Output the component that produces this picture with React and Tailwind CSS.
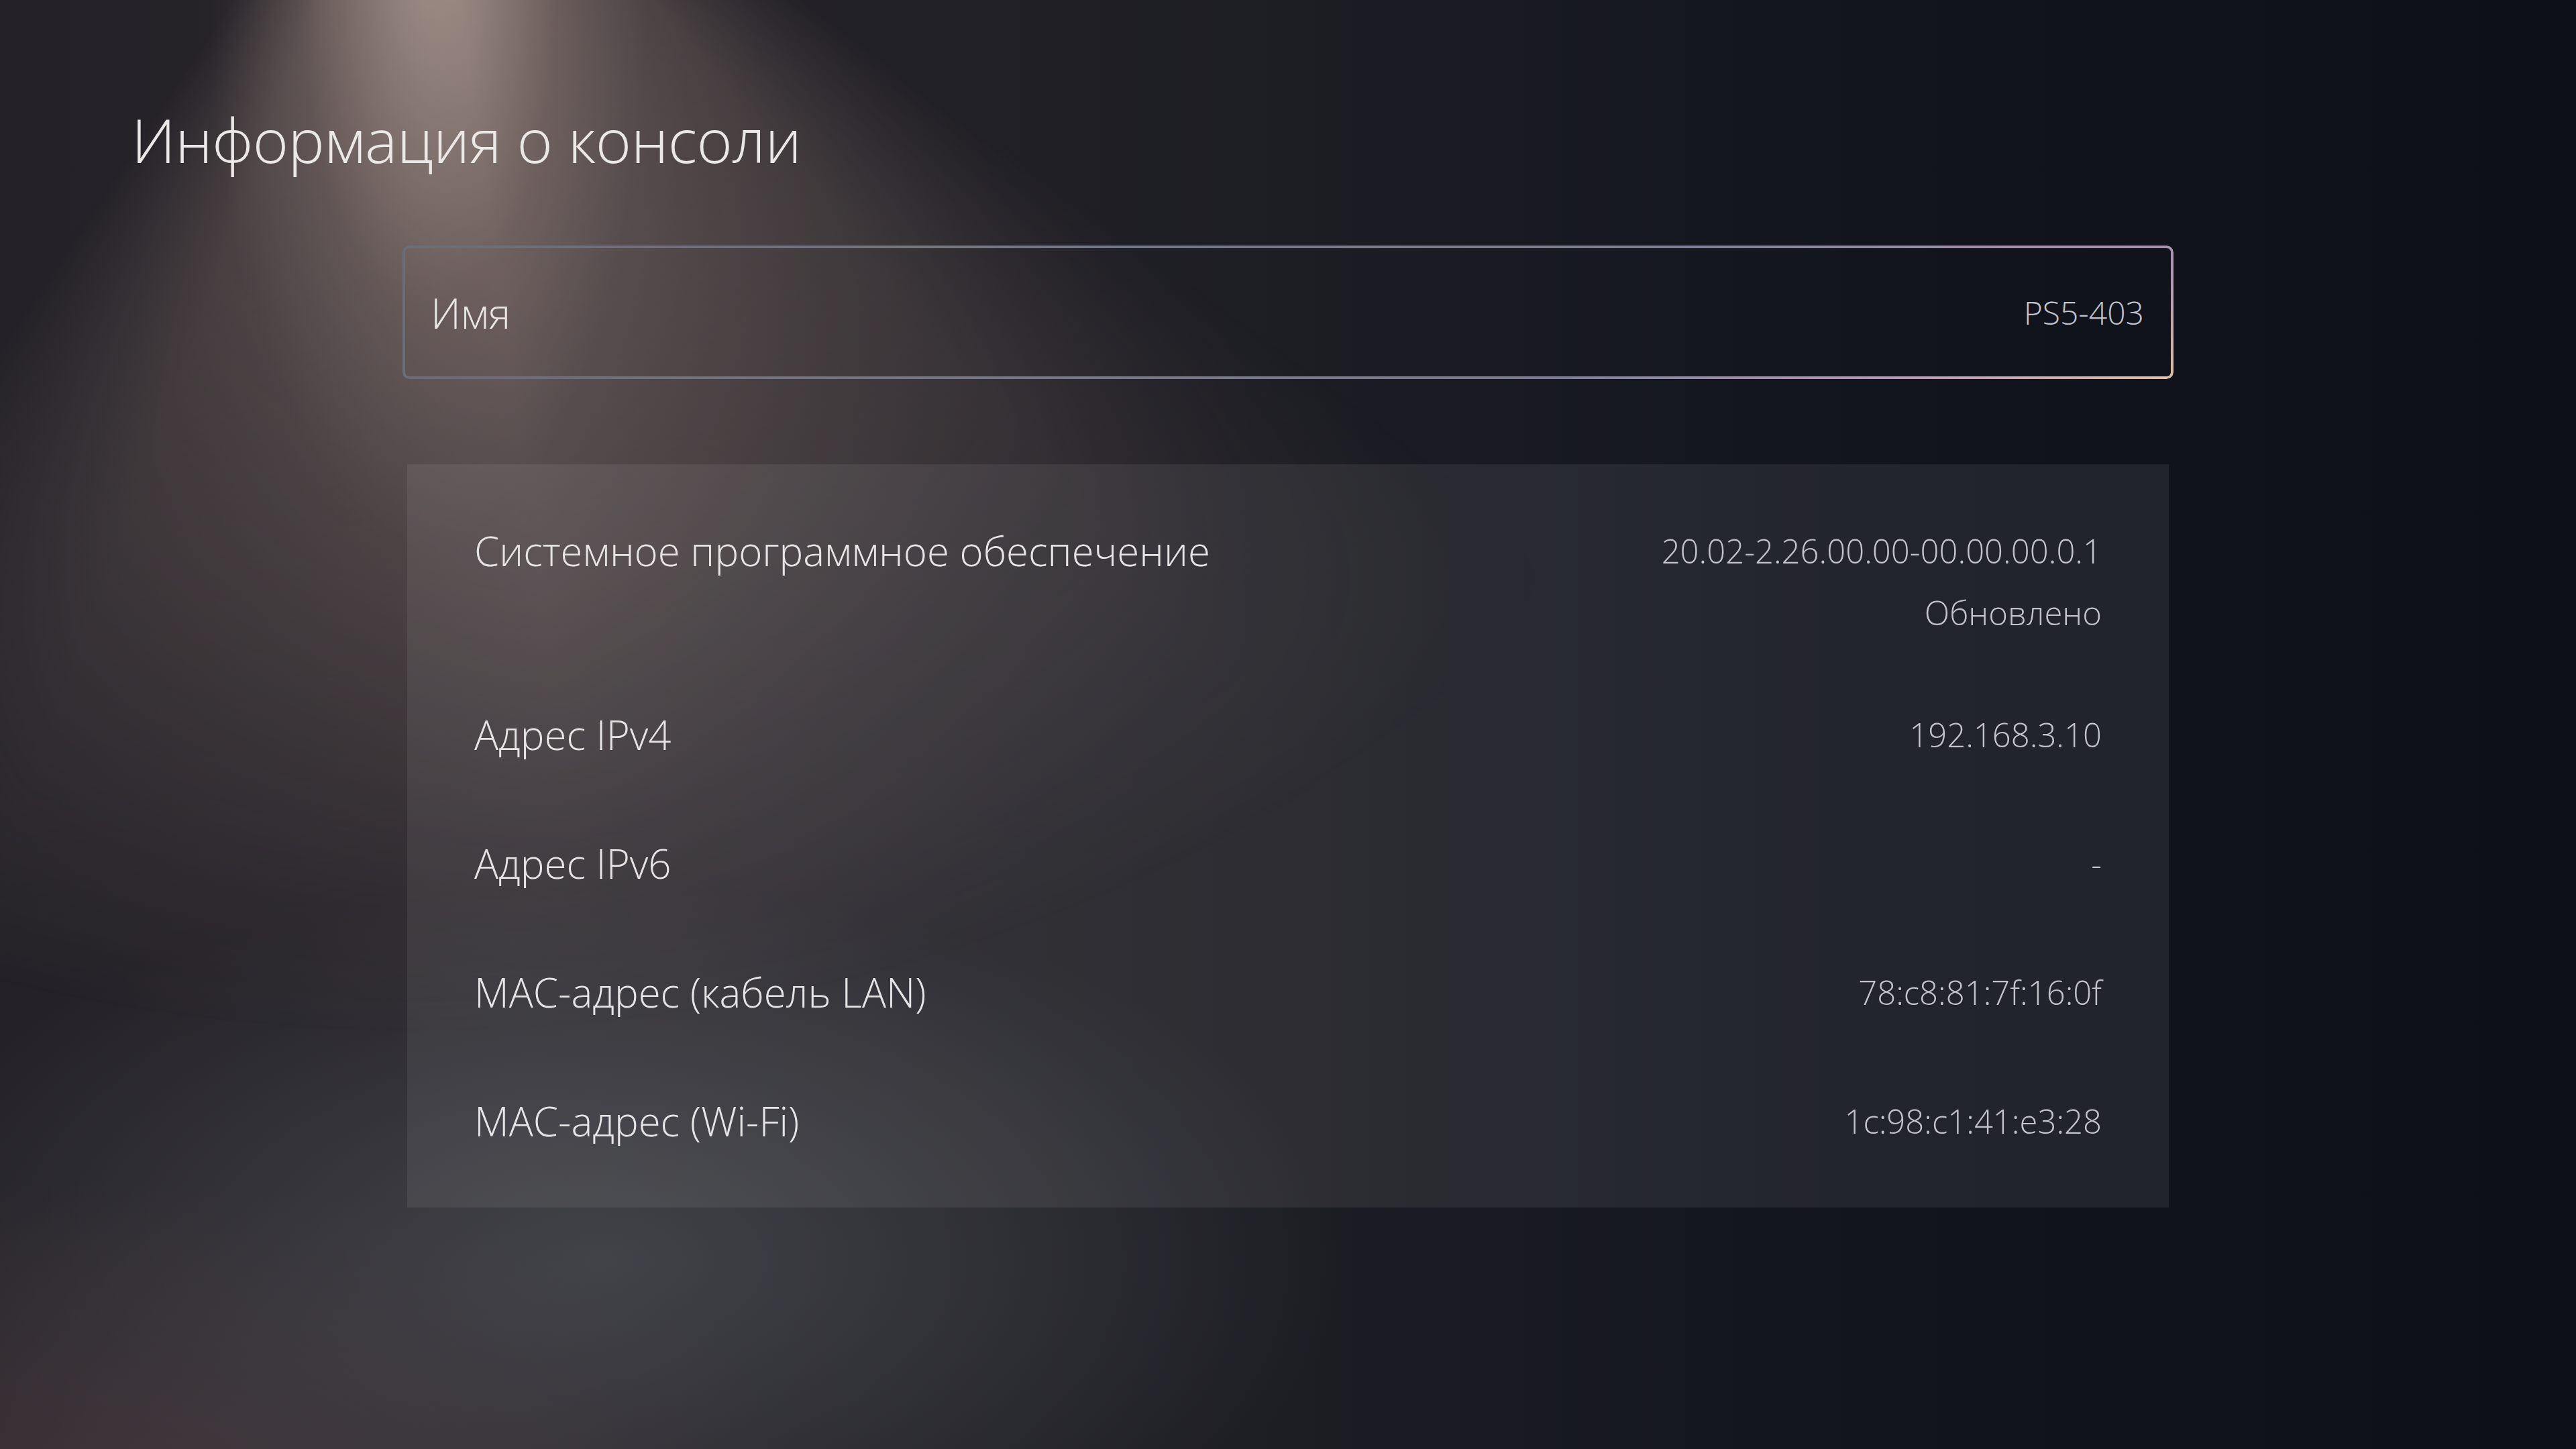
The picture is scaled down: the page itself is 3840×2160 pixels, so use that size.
import React from "react";

const ROWS = [
  {
    label: "Системное программное обеспечение",
    values: ["20.02-2.26.00.00-00.00.00.0.1", "Обновлено"],
    extra: "pb-[40px]",
  },
  { label: "Адрес IPv4", values: ["192.168.3.10"] },
  { label: "Адрес IPv6", values: ["-"] },
  { label: "MAC-адрес (кабель LAN)", values: ["78:c8:81:7f:16:0f"] },
  { label: "MAC-адрес (Wi-Fi)", values: ["1c:98:c1:41:e3:28"] },
];

const InfoRow = ({ label, values, extra = "pb-[50px]" }) => (
  <div className={`flex items-start justify-between px-[100px] pt-[50px] ${extra}`}>
    <span className="text-[60px] leading-[92px] text-[#e6e4e4]">{label}</span>
    <div className="flex flex-col items-end">
      {values.map((v) => (
        <span key={v} className="text-[49px] leading-[92px] text-[#c3c3ca]">
          {v}
        </span>
      ))}
    </div>
  </div>
);

export default function App() {
  return (
    <div className="relative h-[2160px] w-full overflow-hidden font-['Open_Sans',sans-serif] font-light bg-[radial-gradient(ellipse_1100px_560px_at_900px_1880px,rgba(84,88,94,0.6),transparent_100%),radial-gradient(ellipse_1000px_460px_at_200px_2220px,rgba(76,58,62,0.65),transparent_100%),linear-gradient(to_right,#242228_0%,#27242a_20%,#1d1d24_50%,#12151e_72%,#0d1019_100%)]">
      {/* light beam */}
      <div
        aria-hidden="true"
        className="pointer-events-none absolute inset-0 bg-[conic-gradient(from_0deg_at_626px_-415px,transparent_126deg,rgba(120,104,100,0.5)_140deg,rgba(155,134,128,0.72)_172deg,rgba(125,108,104,0.55)_200deg,transparent_214deg)] [mask-image:radial-gradient(ellipse_2700px_2300px_at_626px_-415px,#000_15%,rgba(0,0,0,0.5)_55%,transparent_85%)]"
      />
      <div
        aria-hidden="true"
        className="pointer-events-none absolute inset-0 bg-[radial-gradient(ellipse_330px_900px_at_637px_-80px,rgba(190,170,160,0.6),rgba(150,130,124,0.2)_60%,transparent_100%)]"
      />

      <div className="relative">
        <h1 className="pl-[196px] pt-[148px] text-[91px] leading-[120px] tracking-[-0.5px] text-[#ebe8e8]">
          Информация о консоли
        </h1>

        <div className="mx-auto mt-[98px] w-[2626px]">
          <div className="relative -mx-[7px] flex h-[199px] items-center justify-between rounded-[10px] pl-[42px] pr-[44px]">
            <span
              aria-hidden="true"
              className="pointer-events-none absolute inset-0 rounded-[10px] p-[4px] bg-[radial-gradient(ellipse_900px_320px_at_100%_100%,#dcbfa3_0%,#b796b6_45%,transparent_100%),linear-gradient(to_right,#6b6e77_0%,#777a8a_50%,#8487a4_100%)] [mask:linear-gradient(#000_0_0)_content-box_exclude,linear-gradient(#000_0_0)]"
            />
            <span className="text-[62px] leading-[92px] text-[#e8e5e5]">Имя</span>
            <span className="text-[48px] leading-[92px] text-[#c2c3cc]">PS5-403</span>
          </div>

          <div className="mt-[127px] bg-white/[0.07] py-[33px]">
            {ROWS.map((row) => (
              <InfoRow key={row.label} {...row} />
            ))}
          </div>
        </div>
      </div>
    </div>
  );
}
